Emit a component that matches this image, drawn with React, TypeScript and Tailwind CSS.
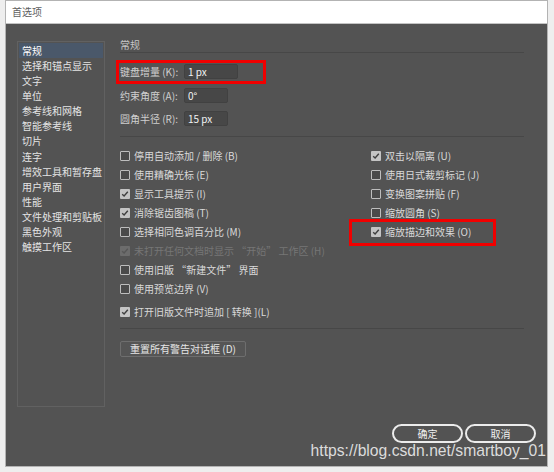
import { FC } from "react";

const cjk = "font-['Noto_Sans_CJK_SC',sans-serif]";

const sideItems = [
  "常规",
  "选择和锚点显示",
  "文字",
  "单位",
  "参考线和网格",
  "智能参考线",
  "切片",
  "连字",
  "增效工具和暂存盘",
  "用户界面",
  "性能",
  "文件处理和剪贴板",
  "黑色外观",
  "触摸工作区",
];

interface CheckOption {
  label: string;
  checked?: boolean;
  disabled?: boolean;
}

const leftOptions: CheckOption[] = [
  { label: "停用自动添加 / 删除 (B)" },
  { label: "使用精确光标 (E)" },
  { label: "显示工具提示 (I)", checked: true },
  { label: "消除锯齿图稿 (T)", checked: true },
  { label: "选择相同色调百分比 (M)" },
  { label: "未打开任何文档时显示 “开始” 工作区 (H)", checked: true, disabled: true },
  { label: "使用旧版 “新建文件” 界面" },
  { label: "使用预览边界 (V)" },
];

const rightOptions: CheckOption[] = [
  { label: "双击以隔离 (U)", checked: true },
  { label: "使用日式裁剪标记 (J)" },
  { label: "变换图案拼贴 (F)" },
  { label: "缩放圆角 (S)" },
  { label: "缩放描边和效果 (O)", checked: true },
];

const CheckBox: FC<{ checked?: boolean; disabled?: boolean }> = ({ checked, disabled }) => {
  if (checked) {
    return (
      <span
        className={`w-[10px] h-[10px] shrink-0 rounded-[1px] flex items-center justify-center ${
          disabled ? "bg-[#6c6c6c]" : "bg-[#c4c4c4]"
        }`}
      >
        <svg width="8" height="8" viewBox="0 0 8 8">
          <path
            d="M1.2 4.2 L3.1 6 L6.8 1.8"
            fill="none"
            stroke={disabled ? "#575757" : "#3f3f3f"}
            strokeWidth="1.4"
          />
        </svg>
      </span>
    );
  }
  return <span className="w-[10px] h-[10px] shrink-0 rounded-[1px] border border-[#bdbdbd] bg-[#4a4a4a]" />;
};

const CheckRow: FC<CheckOption & { className?: string }> = ({ label, checked, disabled, className }) => (
  <div className={`h-[19px] flex items-center gap-[4px] ${className ?? ""}`}>
    <CheckBox checked={checked} disabled={disabled} />
    <span className={`whitespace-nowrap ${disabled ? "text-[#767676]" : "text-[#d9d9d9]"}`}>{label}</span>
  </div>
);

const NumberField: FC<{ label: string; value: string; width: string; className?: string }> = ({
  label,
  value,
  width,
  className,
}) => (
  <div className={`flex items-center h-[15px] ${className ?? ""}`}>
    <span className="w-[64px] text-[#cfcfcf] whitespace-nowrap">{label}</span>
    <span
      className={`${width} h-[15px] bg-[#474747] border border-[#414141] rounded-[2px] pl-[3px] flex items-center text-[#f2f2f2]`}
    >
      {value}
    </span>
  </div>
);

export default function App() {
  return (
    <div className={`relative w-[554px] h-[472px] bg-[#eeeeee] ${cjk} text-[10px] leading-[12px]`}>
      <div className="ml-[5px] w-[543px] h-[467px] border border-[#b3b3b3] flex flex-col">
        <div className="h-[23px] shrink-0 bg-white border-b border-[#c4c4c4] pl-[6px] flex items-center text-[#5e5e5e]">
          首选项
        </div>

        <div className="flex-1 bg-[#535353] flex flex-col pt-[14px] pl-[11px] pr-[11px]">
          <div className="flex">
            {/* sidebar */}
            <div className="mt-[3px] w-[88px] h-[366px] border border-[#616161] p-px">
              {sideItems.map((item, i) => (
                <div
                  key={item}
                  className={`h-[15.15px] pl-[3px] flex items-center whitespace-nowrap ${
                    i === 0 ? "bg-[#4a586a] text-white" : "text-[#e4e4e4]"
                  }`}
                >
                  {item}
                </div>
              ))}
            </div>

            {/* main panel */}
            <div className="ml-[15px] w-[404px] flex flex-col">
              <div className="h-[14px] leading-[14px] text-[#c6c6c6]">常规</div>
              <div className="h-px bg-[#474747]" />

              <div className="relative mt-[11px]">
                <NumberField label="键盘增量 (K):" value="1 px" width="w-[54px]" />
                <span className="absolute left-[-4px] top-[-4px] w-[150px] h-[24px] border-[3px] border-[#f10000]" />
              </div>
              <NumberField label="约束角度 (A):" value="0°" width="w-[44px]" className="mt-[9px]" />
              <NumberField label="圆角半径 (R):" value="15 px" width="w-[44px]" className="mt-[8px]" />

              <div className="mt-[10px] h-px bg-[#474747]" />

              <div className="mt-[9px] flex">
                <div className="w-[251px] flex flex-col">
                  {leftOptions.map((o) => (
                    <CheckRow key={o.label} {...o} />
                  ))}
                  <CheckRow label="打开旧版文件时追加 [ 转换 ](L)" checked className="mt-[4px]" />
                </div>
                <div className="flex flex-col">
                  {rightOptions.map((o, i) => (
                    <div key={o.label} className="relative">
                      <CheckRow {...o} />
                      {i === 4 && (
                        <span className="absolute left-[-22px] top-[-3px] w-[147px] h-[27px] border-[3px] border-[#f10000]" />
                      )}
                    </div>
                  ))}
                </div>
              </div>

              <div className="mt-[7px] h-px bg-[#474747]" />

              <button className="mt-[12px] w-[126px] h-[16px] border border-[#6e6e6e] rounded-[2px] bg-[#555555] text-[#e6e6e6] text-[10px] leading-[12px] flex items-center justify-center">
                重置所有警告对话框 (D)
              </button>
            </div>
          </div>

          <div className="mt-[17px] flex justify-end gap-[2px]">
            <button className="w-[71px] h-[19px] rounded-full border-2 border-[#ececec] text-[#f0f0f0] text-[10px] flex items-center justify-center">
              确定
            </button>
            <button className="w-[71px] h-[19px] rounded-full border-2 border-[#ececec] text-[#f0f0f0] text-[10px] flex items-center justify-center">
              取消
            </button>
          </div>
        </div>
      </div>

      <div className="absolute right-[8px] top-[442px] font-['Liberation_Sans',sans-serif] text-[15.7px] leading-[18px] text-[#dcdcdc] whitespace-nowrap">
        https://blog.csdn.net/smartboy_01
      </div>
    </div>
  );
}
